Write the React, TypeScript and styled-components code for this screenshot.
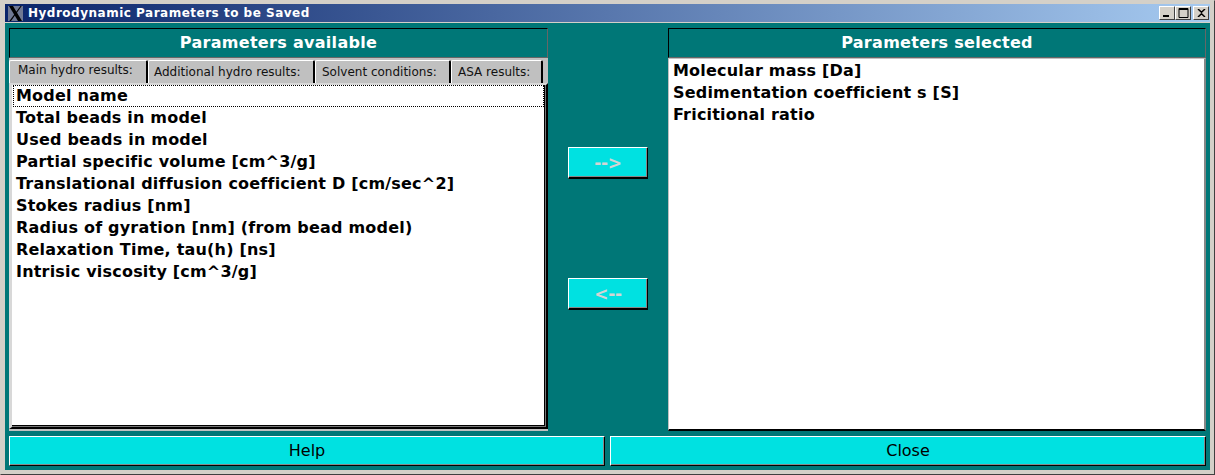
import React from "react";
import styled, { createGlobalStyle, css } from "styled-components";

const Global = createGlobalStyle`
  html, body { margin: 0; padding: 0; background: #d4d0c8; }
  #root { width: 1215px; height: 475px; }
  * { box-sizing: border-box; }
`;

const Frame = styled.div`
  width: 1215px; height: 475px;
  display: flex; flex-direction: column;
  background: #d4d0c8;
  padding: 3px 4px 4px 4px;
  border-top: 1px solid #d4d0c8;
  border-left: 1px solid #d4d0c8;
  border-right: 1px solid #404040;
  border-bottom: 1px solid #404040;
  font-family: "DejaVu Sans", sans-serif;
`;

const TitleBar = styled.div`
  height: 18px; flex: none;
  display: flex; align-items: center;
  background: linear-gradient(90deg, #0a246a 0%, #a6caf0 100%);
  padding: 0 1px 0 0;
`;

const TitleIcon = styled.svg`
  width: 15px; height: 15px; margin: 1px 5px 0 3px; flex: none;
`;

const TitleText = styled.span`
  flex: 1;
  color: #fff; font-weight: bold; font-size: 12px; letter-spacing: 0.5px;
  white-space: nowrap;
`;

const WinBtn = styled.div<{ $gap?: number }>`
  width: 16px; height: 14px; margin-left: ${(p) => p.$gap ?? 0}px;
  background: #d4d0c8;
  border: 1px solid; border-color: #fff #404040 #404040 #fff;
  display: flex; align-items: center; justify-content: center;
`;

const Body = styled.div`
  flex: 1;
  background: #007777;
  margin-top: 1px;
  padding: 5px 4px 4px 4px;
  display: flex; flex-direction: column; gap: 5px;
`;

const Columns = styled.div`
  flex: 1; min-height: 0;
  display: grid;
  grid-template-columns: 539px 1fr 538px;
`;

const Panel = styled.div`
  display: flex; flex-direction: column; min-height: 0;
`;

const Header = styled.div`
  height: 30px; flex: none;
  display: flex; align-items: center; justify-content: center;
  background: #007777; color: #fff;
  font-weight: bold; font-size: 16px; letter-spacing: 0.3px;
  border: 1px solid; border-color: #000 #666 #666 #000;
  padding-bottom: 1px;
`;

const TabWidget = styled.div`
  flex: 1; min-height: 0; display: flex; flex-direction: column;
  background: #c0c0c0;
  padding-bottom: 2px;
`;

const TabBar = styled.div`
  display: flex; height: 25px; flex: none; padding: 2px 0 0 0; background: #c0c0c0;
`;

const Tab = styled.div<{ $w: number; $pad: number; $active?: boolean }>`
  width: ${(p) => p.$w}px; flex: none;
  background: #c0c0c0;
  border-top: 1px solid #fff;
  border-left: 1px solid #fff;
  border-right: 2px solid #000;
  border-radius: 2px 2px 0 0;
  font-size: 12px; color: #111;
  white-space: nowrap;
  display: flex; align-items: center;
  padding: ${(p) => (p.$active ? "0 0 4px" : "0 0 0")};
  padding-left: ${(p) => p.$pad}px;
`;

const List = styled.div<{ $sunken?: boolean }>`
  flex: 1; min-height: 0; background: #fff;
  font-weight: bold; font-size: 16px; color: #000; letter-spacing: 0.2px;
  ${(p) =>
    p.$sunken
      ? css`
          border-left: 3px solid #d8d8d8;
          border-top: 2px solid #d8d8d8;
          border-right: 2px solid #000;
          border-bottom: 2px solid #000;
          box-shadow: inset -1px -1px 0 #777, inset -2px -2px 0 #000;
          padding: 0 2px 0 1px;
        `
      : css`
          border-left: 1px solid #c0c0c0;
          border-top: 1px solid #c0c0c0;
          border-right: 2px solid #888;
          border-bottom: 2px solid #000;
          padding: 1px 0 0 0;
        `}
`;

const Item = styled.div<{ $current?: boolean; $inset?: number }>`
  height: 22px; display: flex; align-items: center;
  padding: 0 0 2px ${(p) => p.$inset ?? 2}px;
  white-space: nowrap;
  border: 1px dotted ${(p) => (p.$current ? "#000" : "transparent")};
`;

const Middle = styled.div`
  display: flex; flex-direction: column; align-items: center;
  padding: 119px 0 0 0; gap: 99px;
`;

const ArrowBtn = styled.button`
  width: 80px; height: 32px; padding: 1px 0 0;
  background: #00e1e1; color: #d4d4d4;
  font-family: "DejaVu Sans", sans-serif; font-weight: bold; font-size: 17px;
  letter-spacing: -0.3px;
  border: 1px solid; border-color: #fff #000 #000 #fff;
  border-bottom-width: 2px;
  box-shadow: inset -1px -1px 0 #888;
`;

const Footer = styled.div`
  height: 30px; flex: none;
  display: grid; grid-template-columns: 596px 1fr; gap: 5px;
`;

const FootBtn = styled.button`
  background: #00e1e1; color: #000; padding: 0 0 2px;
  font-family: "DejaVu Sans", sans-serif; font-size: 16px;
  border: 1px solid; border-color: #fff #000 #000 #fff;
  box-shadow: inset -1px -1px 0 #888;
`;

const available = [
  "Model name",
  "Total beads in model",
  "Used beads in model",
  "Partial specific volume [cm^3/g]",
  "Translational diffusion coefficient D [cm/sec^2]",
  "Stokes radius [nm]",
  "Radius of gyration [nm] (from bead model)",
  "Relaxation Time, tau(h) [ns]",
  "Intrisic viscosity [cm^3/g]",
];
const selected = ["Molecular mass [Da]", "Sedimentation coefficient s [S]", "Fricitional ratio"];
const tabs = [
  { t: "Main hydro results:", w: 139, pad: 8 },
  { t: "Additional hydro results:", w: 167, pad: 5 },
  { t: "Solvent conditions:", w: 136, pad: 6 },
  { t: "ASA results:", w: 92, pad: 6 },
];

export default function App() {
  return (
    <Frame>
      <Global />
      <TitleBar>
        <TitleIcon viewBox="0 0 15 15">
          <rect width="15" height="15" fill="#6f7892" />
          <path d="M1 0h4l9 15h-4z" fill="#000" />
          <path d="M12.5 0h1.2L3 15H1.4z" fill="#000" />
        </TitleIcon>
        <TitleText>Hydrodynamic Parameters to be Saved</TitleText>
        <WinBtn>
          <svg width="10" height="9" viewBox="0 0 10 9"><rect x="1" y="6" width="6" height="2" fill="#000" /></svg>
        </WinBtn>
        <WinBtn>
          <svg width="11" height="10" viewBox="0 0 11 10"><path d="M1 0.5h9v9h-9zM1 1.5h9" fill="none" stroke="#000" /></svg>
        </WinBtn>
        <WinBtn $gap={2}>
          <svg width="9" height="8" viewBox="0 0 9 8"><path d="M1 0l3.5 3.2L8 0M1 8l3.5-3.2L8 8" fill="none" stroke="#000" strokeWidth="1.5" /></svg>
        </WinBtn>
      </TitleBar>
      <Body>
        <Columns>
          <Panel>
            <Header>Parameters available</Header>
            <TabWidget>
              <TabBar>
                {tabs.map((t, i) => (
                  <Tab key={t.t} $w={t.w} $pad={t.pad} $active={i === 0}>{t.t}</Tab>
                ))}
              </TabBar>
              <List $sunken>
                {available.map((a, i) => (
                  <Item key={a} $current={i === 0}>{a}</Item>
                ))}
              </List>
            </TabWidget>
          </Panel>
          <Middle>
            <ArrowBtn>--&gt;</ArrowBtn>
            <ArrowBtn>&lt;--</ArrowBtn>
          </Middle>
          <Panel>
            <Header>Parameters selected</Header>
            <List>
              {selected.map((a) => (
                <Item key={a} $inset={3}>{a}</Item>
              ))}
            </List>
          </Panel>
        </Columns>
        <Footer>
          <FootBtn>Help</FootBtn>
          <FootBtn>Close</FootBtn>
        </Footer>
      </Body>
    </Frame>
  );
}
